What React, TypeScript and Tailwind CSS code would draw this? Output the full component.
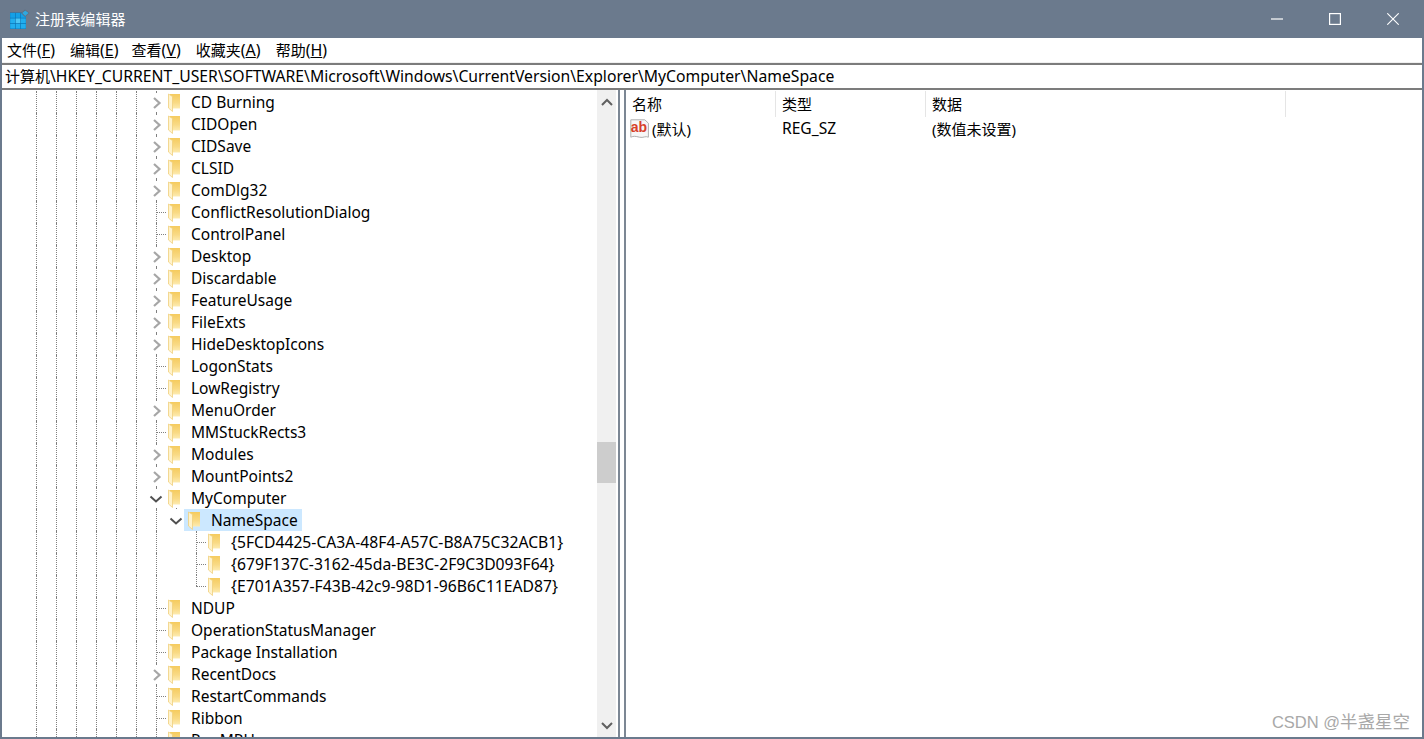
import React from "react";

const FONT = "font-['Noto_Sans','Noto_Sans_CJK_SC',sans-serif]";
const DOT = "border-l border-dotted border-[#808080]";

function Folder() {
  return (
    <svg width="16" height="20" viewBox="0 0 16 20" className="shrink-0">
      <defs>
        <linearGradient id="fy" x1="0" y1="0" x2="0" y2="1">
          <stop offset="0" stopColor="#f5cb5e" />
          <stop offset="0.6" stopColor="#f9da85" />
          <stop offset="1" stopColor="#fdebb0" />
        </linearGradient>
      </defs>
      <path d="M3 2h10v14.5H3z" fill="url(#fy)" />
      <path d="M1.5 2L5.5 4.5V19.5L1.5 16z" fill="#fff3cc" stroke="#f0cf7c" strokeWidth="0.8" strokeLinejoin="round" />
    </svg>
  );
}

function ChevRight() {
  return (
    <svg width="12" height="14" viewBox="0 0 12 14" className="absolute left-[-4px] top-[5px]">
      <path d="M2 2L7.5 7L2 12" fill="none" stroke="#a6a6a6" strokeWidth="2.2" />
    </svg>
  );
}

function ChevDown() {
  return (
    <svg width="14" height="9" viewBox="0 0 14 9" className="absolute left-[-7px] top-[8px]">
      <path d="M1.5 1.5L7 6.5L12.5 1.5" fill="none" stroke="#505050" strokeWidth="2" />
    </svg>
  );
}

type RowProps = { name: string; kind: "closed" | "leaf" | "open" };

function Guides({ n }: { n: number }) {
  return (
    <>
      {Array.from({ length: n }).map((_, i) => (
        <div key={i} className={`w-5 h-full shrink-0 ${DOT}`} />
      ))}
    </>
  );
}

function Row({ name, kind }: RowProps) {
  return (
    <div className="flex items-center h-[22px] pl-9">
      <Guides n={6} />
      <div className="relative w-[35px] h-full shrink-0 flex items-center">
        <div className={`absolute left-0 top-0 bottom-0 ${DOT}`} />
        {kind === "leaf" && <div className="absolute left-0 top-[11px] w-2.5 border-t border-dotted border-[#808080]" />}
        {kind !== "leaf" && <div className="absolute left-[-8px] top-[2px] bottom-[2px] w-[17px] bg-white" />}
        {kind === "closed" && <ChevRight />}
        {kind === "open" && <ChevDown />}
        <div className="absolute left-[11px] top-px"><Folder /></div>
      </div>
      <span className="whitespace-nowrap text-[15.5px] mt-[2px]">{name}</span>
    </div>
  );
}

function NameSpaceRow() {
  return (
    <div className="flex items-center h-[22px] pl-9">
      <Guides n={7} />
      <div className="relative w-2 h-full shrink-0">
        <div className="absolute left-0 top-[-1px] w-px h-px bg-[#808080]" />
        <ChevDown />
      </div>
      <div className="relative flex items-center h-full w-[118px] bg-[#cce8ff] pl-[27px]">
        <div className="absolute left-[3px] top-px"><Folder /></div>
        <span className="whitespace-nowrap text-[15.5px] mt-[2px]">NameSpace</span>
      </div>
    </div>
  );
}

function ChildRow({ name, last }: { name: string; last?: boolean }) {
  return (
    <div className="flex items-center h-[22px] pl-9">
      <Guides n={7} />
      <div className="w-5 shrink-0" />
      <div className="relative w-[35px] h-full shrink-0">
        <div className={`absolute left-0 top-0 ${DOT} ${last ? "h-[11px]" : "bottom-0"}`} />
        <div className="absolute left-0 top-[11px] w-2.5 border-t border-dotted border-[#808080]" />
        <div className="absolute left-[11px] top-px"><Folder /></div>
      </div>
      <span className="whitespace-nowrap text-[15.7px] mt-[2px]">{name}</span>
    </div>
  );
}

const before: RowProps[] = [
  { name: "CD Burning", kind: "closed" },
  { name: "CIDOpen", kind: "closed" },
  { name: "CIDSave", kind: "closed" },
  { name: "CLSID", kind: "closed" },
  { name: "ComDlg32", kind: "closed" },
  { name: "ConflictResolutionDialog", kind: "leaf" },
  { name: "ControlPanel", kind: "leaf" },
  { name: "Desktop", kind: "closed" },
  { name: "Discardable", kind: "closed" },
  { name: "FeatureUsage", kind: "closed" },
  { name: "FileExts", kind: "closed" },
  { name: "HideDesktopIcons", kind: "closed" },
  { name: "LogonStats", kind: "leaf" },
  { name: "LowRegistry", kind: "leaf" },
  { name: "MenuOrder", kind: "closed" },
  { name: "MMStuckRects3", kind: "leaf" },
  { name: "Modules", kind: "closed" },
  { name: "MountPoints2", kind: "closed" },
  { name: "MyComputer", kind: "open" },
];

const after: RowProps[] = [
  { name: "NDUP", kind: "leaf" },
  { name: "OperationStatusManager", kind: "leaf" },
  { name: "Package Installation", kind: "leaf" },
  { name: "RecentDocs", kind: "closed" },
  { name: "RestartCommands", kind: "leaf" },
  { name: "Ribbon", kind: "leaf" },
  { name: "RunMRU", kind: "leaf" },
];

function RegIcon() {
  const cols = [0, 5.4, 10.8];
  const rows = [4, 9.4, 14.8];
  return (
    <svg width="20" height="20" viewBox="0 0 20 20" className="shrink-0">
      <rect x="0" y="3.6" width="16" height="16.4" fill="#0a6fb0" />
      {rows.map((y, r) =>
        cols.map((x, c) => (
          <rect key={`${r}-${c}`} x={x + 0.2} y={y} width="4.8" height="4.8" fill={r === 1 && c === 1 ? "#4cc6f5" : r === 0 ? "#14a0e6" : "#22aeee"} />
        ))
      )}
      <path d="M15 0.5L19.5 4L15 8L11 4z" fill="#5d6d80" />
      <path d="M15.2 1.5L18.6 4L15.2 7L12.2 4z" fill="#2fa8df" />
    </svg>
  );
}

function AbIcon() {
  return (
    <svg width="20" height="20" viewBox="0 0 20 20" className="shrink-0">
      <path d="M0.8 0.8h14l3.6 3.4v14c-3-1.6-5 1-9 0s-5.6-1.4-8.6 0z" fill="#f7f7f7" stroke="#b0b0b0" strokeWidth="1" />
      <text x="0.8" y="13" fontSize="14" fontWeight="700" fill="#d8402a" fontFamily="Liberation Sans, sans-serif">ab</text>
    </svg>
  );
}

function ColHead({ label, w }: { label: string; w: string }) {
  return (
    <div className={`${w} h-full shrink-0 pl-[6px] border-r border-[#e5e5e5] flex items-center`}>
      <span>{label}</span>
    </div>
  );
}

function MenuItem({ label, k, tight }: { label: string; k: string; tight?: boolean }) {
  return (
    <span className={`whitespace-nowrap ${tight ? "-mr-[2px]" : ""}`}>
      {label}
      <span className="text-[16px]">(<u>{k}</u>)</span>
    </span>
  );
}

export default function App() {
  return (
    <div className={`${FONT} relative w-[1424px] h-[739px] overflow-hidden flex flex-col bg-[#6b7a8d] text-[15px] text-black px-[2px] pb-[2px]`}>
      <div className="h-[38px] -mx-[2px] flex items-center shrink-0 text-white pl-[10px]">
        <RegIcon />
        <span className="ml-[5px] tracking-[0.1px]">注册表编辑器</span>
        <div className="ml-auto flex items-center h-full pr-[25px] gap-[46px]">
          <svg width="12" height="12" viewBox="0 0 12 12"><path d="M0 6h12" stroke="#fff" strokeWidth="1.2" /></svg>
          <svg width="12" height="12" viewBox="0 0 12 12"><rect x="0.6" y="0.6" width="10.8" height="10.8" fill="none" stroke="#fff" strokeWidth="1.2" /></svg>
          <svg width="12" height="12" viewBox="0 0 12 12"><path d="M0.3 0.3L11.7 11.7M11.7 0.3L0.3 11.7" stroke="#fff" strokeWidth="1.1" /></svg>
        </div>
      </div>

      <div className="h-[25px] bg-white flex items-center shrink-0 border-b border-[#f0f0f0] pl-[5px] gap-[15px]">
        <MenuItem label="文件" k="F" />
        <MenuItem label="编辑" k="E" tight />
        <MenuItem label="查看" k="V" />
        <MenuItem label="收藏夹" k="A" />
        <MenuItem label="帮助" k="H" />
      </div>

      <div className="h-[27px] bg-white flex items-center shrink-0 border-y-2 border-[#7c7c7c] pl-[3px] whitespace-nowrap">
        <span>计算机</span>
        <span className="text-[15.72px]">\HKEY_CURRENT_USER\SOFTWARE\Microsoft\Windows\CurrentVersion\Explorer\MyComputer\NameSpace</span>
      </div>

      <div className="flex-1 min-h-0 flex bg-white">
        <div className="w-[618px] shrink-0 flex border-r-2 border-[#7c8794] overflow-hidden">
          <div className="w-[597px] -ml-[2px] pt-px overflow-hidden shrink-0">
            {before.map((r) => <Row key={r.name} {...r} />)}
            <NameSpaceRow />
            <ChildRow name="{5FCD4425-CA3A-48F4-A57C-B8A75C32ACB1}" />
            <ChildRow name="{679F137C-3162-45da-BE3C-2F9C3D093F64}" />
            <ChildRow name="{E701A357-F43B-42c9-98D1-96B6C11EAD87}" last />
            {after.map((r) => <Row key={r.name} {...r} />)}
          </div>
          <div className="w-[19px] mr-[2px] shrink-0 bg-[#f0f0f0] flex flex-col items-center">
            <div className="h-[23px] w-full flex items-center justify-center shrink-0">
              <svg width="12" height="8" viewBox="0 0 12 8"><path d="M1 7L6 2L11 7" fill="none" stroke="#606060" strokeWidth="2" /></svg>
            </div>
            <div className="h-[329px] shrink-0" />
            <div className="h-[41px] w-full bg-[#cdcdcd] shrink-0" />
            <div className="flex-1" />
            <div className="h-[23px] w-full flex items-center justify-center shrink-0">
              <svg width="12" height="8" viewBox="0 0 12 8"><path d="M1 1L6 6L11 1" fill="none" stroke="#606060" strokeWidth="2" /></svg>
            </div>
          </div>
        </div>
        <div className="flex-1 ml-[4px] border-l-2 border-[#7c8794] min-w-0">
          <div className="flex h-[27px] items-center pt-px">
            <ColHead label="名称" w="w-[150px]" />
            <ColHead label="类型" w="w-[150px]" />
            <ColHead label="数据" w="w-[360px]" />
          </div>
          <div className="flex items-center h-6">
            <div className="w-[150px] flex items-center pl-[4px] gap-[2px] shrink-0"><AbIcon /><span>(默认)</span></div>
            <div className="w-[150px] pl-[6px] shrink-0 text-[15.6px]">REG_SZ</div>
            <div className="pl-[6px]">(数值未设置)</div>
          </div>
        </div>
      </div>

      <span className="absolute right-[14px] bottom-[5px] leading-[24px] text-[17.5px] text-[#a8a8a8] font-['Liberation_Sans','Noto_Sans_CJK_SC',sans-serif]">
        <span className="text-[16.5px]">CSDN @</span>半盏星空
      </span>
    </div>
  );
}
